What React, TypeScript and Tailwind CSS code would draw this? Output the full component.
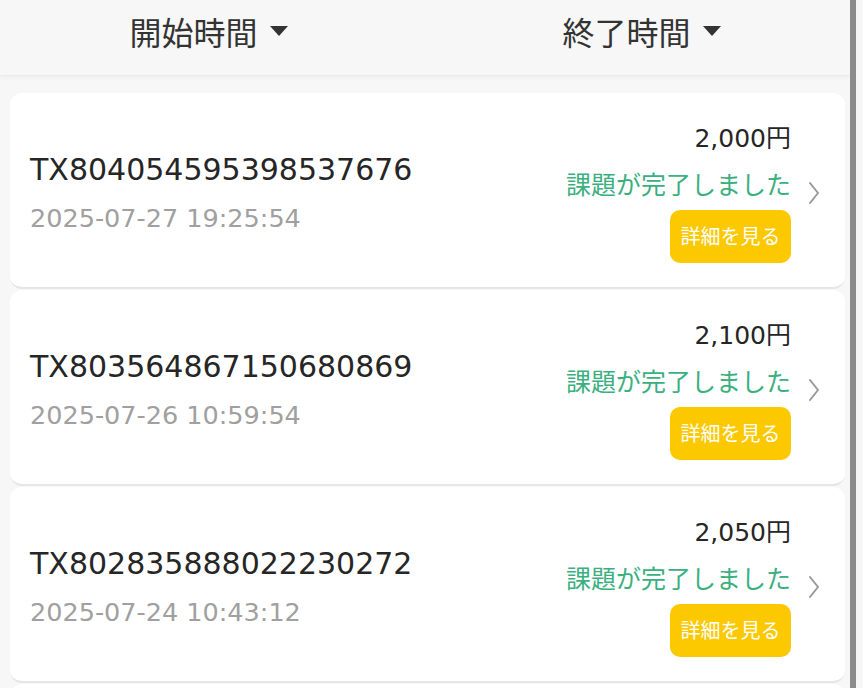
import React from "react";

const rows = [
  { id: "TX804054595398537676", date: "2025-07-27 19:25:54", amount: "2,000円" },
  { id: "TX803564867150680869", date: "2025-07-26 10:59:54", amount: "2,100円" },
  { id: "TX802835888022230272", date: "2025-07-24 10:43:12", amount: "2,050円" },
];

const jp = { fontFamily: '"Noto Sans CJK JP", "Noto Sans", sans-serif' };
const num = { fontFamily: '"DejaVu Sans", "Noto Sans CJK JP", sans-serif' };

function Caret() {
  return (
    <svg width="18" height="11" viewBox="0 0 18 11" className="ml-[12px] mt-[2px]">
      <path d="M0 0 H18 L9 10 Z" fill="#333" />
    </svg>
  );
}

function Chevron() {
  return (
    <svg width="16" height="26" viewBox="0 0 16 26">
      <path d="M4 3 L12 13 L4 23" fill="none" stroke="#999" strokeWidth="2" strokeLinecap="round" strokeLinejoin="round" />
    </svg>
  );
}

export default function App() {
  return (
    <div className="flex h-[688px] w-[863px] overflow-hidden bg-[#f7f7f7]">
      <div className="flex w-[850px] flex-col">
        <div className="flex h-[76px] shrink-0 border-b border-[#ebebeb] bg-[#f7f7f7] pb-[14px] shadow-[0_2px_4px_rgba(0,0,0,0.04)]">
          <div className="flex flex-1 items-center justify-center pr-[2px]">
            <span className="text-[32px] leading-none text-[#333]" style={jp}>開始時間</span>
            <Caret />
          </div>
          <div className="flex flex-1 items-center justify-center pl-[14px]">
            <span className="text-[32px] leading-none text-[#333]" style={jp}>終了時間</span>
            <Caret />
          </div>
        </div>
        <div className="flex flex-col gap-[1px] pl-[10px] pr-[5px] pt-[17px]">
          {rows.map((r) => (
            <div
              key={r.id}
              className="flex h-[196px] shrink-0 items-center rounded-[12px] border-b-2 border-[#e6e6e6] bg-white pl-[20px] pr-[23px]"
            >
              <div className="flex flex-1 flex-col pt-[6px]">
                <div className="text-[30px] leading-none text-[#262626]" style={num}>{r.id}</div>
                <div className="mt-[21px] text-[25.5px] leading-none text-[#a0a0a0]" style={num}>{r.date}</div>
              </div>
              <div className="flex flex-col items-end pt-[8px]">
                <div className="text-[25px] leading-none text-[#262626]" style={num}>{r.amount}</div>
                <div className="mt-[20px] text-[25px] leading-none text-[#3bb07f]" style={jp}>課題が完了しました</div>
                <div
                  className="mt-[14px] flex h-[53px] w-[121px] items-center justify-center rounded-[10px] bg-[#fcc800] text-[20px] text-white"
                  style={jp}
                >
                  詳細を見る
                </div>
              </div>
              <div className="ml-[15px] flex items-center pt-[6px]">
                <Chevron />
              </div>
            </div>
          ))}
          <div className="h-[196px] shrink-0 rounded-[12px] bg-white" />
        </div>
      </div>
      <div className="h-full w-[6px] bg-[#8c8c8c]" />
      <div className="h-full flex-1 bg-[#f7f7f7]" />
    </div>
  );
}
